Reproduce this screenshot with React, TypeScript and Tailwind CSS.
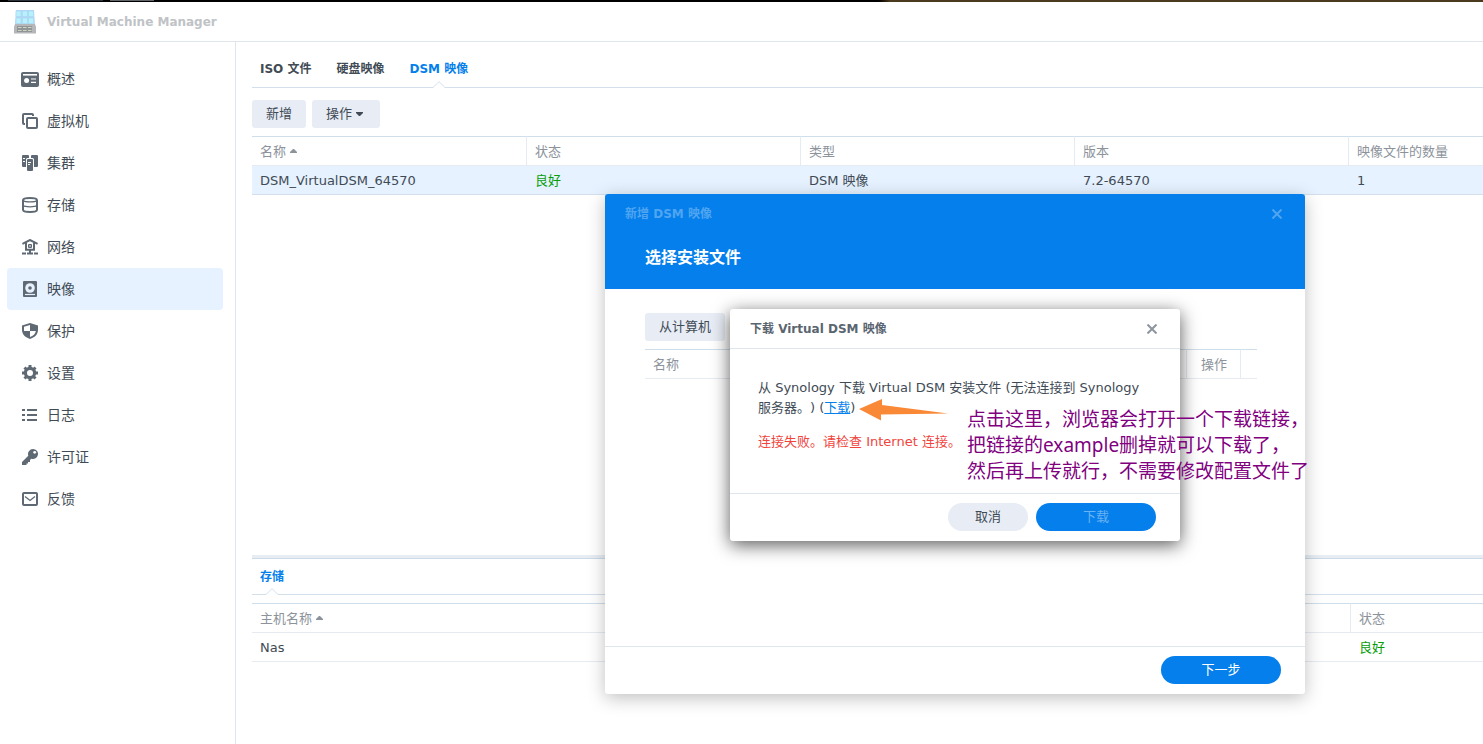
import type { ReactNode } from 'react';

const OverviewIcon = () => (
  <svg width="18" height="16" viewBox="0 0 18 16" className="-mx-px">
    <rect y="1" width="18" height="15" rx="2" fill="#5f6974" />
    <path d="M2 3h14v1.6H2z" fill="#fff" />
    <circle cx="5.6" cy="9.5" r="2.5" fill="#fff" />
    <path d="M10 8h5M10 11.3h5" stroke="#fff" strokeWidth="1.2" />
  </svg>
);

const MachineIcon = () => (
  <svg width="16" height="16" viewBox="0 0 16 16" fill="none" stroke="#5f6974" strokeWidth="2">
    <path d="M3 11H2a1 1 0 0 1-1-1V2a1 1 0 0 1 1-1h8a1 1 0 0 1 1 1v1" />
    <rect x="5" y="5" width="10" height="10" rx="1" />
  </svg>
);

const ClusterIcon = () => (
  <svg width="16" height="16" viewBox="0 0 16 16" fill="#5f6974">
    <path d="M1 0h5a1 1 0 0 1 1 1v2H5.5Q4 3 4 4.5V12H1a1 1 0 0 1-1-1V1a1 1 0 0 1 1-1z" />
    <path d="M10 0h5a1 1 0 0 1 1 1v10a1 1 0 0 1-1 1h-3V4.500Q12 3 10.500 3H9V1a1 1 0 0 1 1-1z" />
    <rect x="5" y="4" width="6" height="12" rx="1" />
    <path d="M1 3.500h2M1 6.500h2M6 7.500h3M6 9.500h2" stroke="#fff" />
  </svg>
);

const StorageIcon = () => (
  <svg width="16" height="16" viewBox="0 0 16 16" fill="none" stroke="#5f6974">
    <path d="M1 3.2C1 .3 15 .3 15 3.2V12.800C15 15.700 1 15.700 1 12.800z" strokeWidth="2" />
    <path d="M1 3.500C3 5.300 13 5.300 15 3.500M1 8.500C3 10.200 13 10.200 15 8.500" strokeWidth="1.300" />
  </svg>
);

const NetworkIcon = () => (
  <svg width="16" height="16" viewBox="0 0 16 16" fill="none" stroke="#5f6974">
    <path d="M.4 4.800L8 1l7.600 3.800" strokeWidth="2" />
    <path d="M4 3.500V10.700h8V3.500" strokeWidth="2" />
    <path d="M8 11v3M0 14.500h4M5 14.500h6M12 14.500h4" strokeWidth="2" />
    <rect x="6" y="5" width="4" height="4" rx="1" fill="#5f6974" stroke="none" />
    <circle cx="8" cy="7" r=".8" fill="#fff" stroke="none" />
  </svg>
);

const ImageIcon = () => (
  <svg width="16" height="16" viewBox="0 0 16 16">
    <rect x="1" width="14" height="16" rx="1" fill="#5f6974" />
    <circle cx="8" cy="7" r="4.800" fill="#e6f2ff" />
    <circle cx="8" cy="7" r="1.800" fill="#5f6974" />
    <path d="M3 13.500h10" stroke="#e6f2ff" strokeWidth="1.200" />
  </svg>
);

const ShieldIcon = () => (
  <svg width="16" height="16" viewBox="0 0 16 16">
    <path d="M8 0l8 2.500V7c0 4.500-3.500 7.500-8 9C3.500 14.500 0 11.500 0 7V2.500z" fill="#5f6974" />
    <path d="M8 2v6H2V3.800zM8 8h5.800C13.500 11 11 12.800 8 14z" fill="#fff" />
  </svg>
);

const GearIcon = () => (
  <svg width="16" height="16" viewBox="0 0 16 16" fill="none" stroke="#5f6974">
    <circle cx="8" cy="8" r="4.600" strokeWidth="3.200" />
    <path d="M8 0v3M8 13v3M0 8h3M13 8h3M2.500 2.500l2 2M11.500 11.500l2 2M13.500 2.500l-2 2M4.500 11.500l-2 2" strokeWidth="3" />
  </svg>
);

const LogIcon = () => (
  <svg width="16" height="16" viewBox="0 0 16 16" stroke="#5f6974" strokeWidth="2">
    <path d="M0 3h3M5 3h10M0 8h3M5 8h10M0 13h3M5 13h10" />
  </svg>
);

const KeyIcon = () => (
  <svg width="16" height="16" viewBox="0 0 16 16">
    <path d="M11 0a5 5 0 1 1-1.700 9.700L8 11v2H6v1.500H4.500V16H0v-3l6.300-6.300A5 5 0 0 1 11 0z" fill="#5f6974" />
    <circle cx="12.700" cy="3.300" r="1.400" fill="#fff" />
  </svg>
);

const MailIcon = () => (
  <svg width="16" height="16" viewBox="0 0 16 16" fill="none" stroke="#5f6974">
    <rect x="1" y="2" width="14" height="12" rx="1" strokeWidth="2" />
    <path d="M3 5.500l5 4 5-4" strokeWidth="1.300" />
  </svg>
);

const AppLogo = () => (
  <svg width="24" height="24" viewBox="0 0 24 24">
    <path d="M3 0h18l1 15H2z" fill="#b9d3f5" />
    <g fill="#b8f0fb" stroke="#a0dbf3" strokeWidth=".6">
      <rect x="3" y="1" width="5" height="5.500" />
      <rect x="9.300" y="1" width="5" height="5.500" />
      <rect x="15.600" y="1" width="5" height="5.500" />
      <rect x="3" y="8" width="5" height="5.500" />
      <rect x="9.300" y="8" width="5" height="5.500" />
      <rect x="15.600" y="8" width="5" height="5.500" />
    </g>
    <path d="M2 14h20l1 3v6.500H1V17z" fill="#b4b6b9" />
    <rect x="4" y="16" width="15" height="6" fill="#929596" />
    <path d="M5 17.500h3.500M10 17.500h3.500M15 17.500h3.500M5 20.500h3.500M10 20.500h3.500M15 20.500h3.500" stroke="#cdd5c4" strokeWidth="1.200" />
  </svg>
);

const CloseIcon = () => (
  <svg width="10" height="10" viewBox="0 0 10 10" stroke="currentColor" strokeWidth="2">
    <path d="M.5.5l9 9M9.500.5l-9 9" />
  </svg>
);

const SortIcon = () => (
  <svg width="7" height="7" viewBox="0 0 7 7" className="inline-block align-middle ml-1" fill="#8c939b">
    <path d="M0 4V3l3-3h1l3 3v1z" />
  </svg>
);

const Notch = () => (
  <svg width="12" height="7" viewBox="0 0 12 7" className="absolute left-1/2 -bottom-px -translate-x-1/2">
    <path d="M0 6.500L6 .7l6 5.800V7H0z" fill="#fff" />
    <path d="M0 6.500L6 .7l6 5.800" fill="none" stroke="#d5e0ec" />
  </svg>
);

const menu: { label: string; icon: ReactNode; active?: boolean }[] = [
  { label: '概述', icon: <OverviewIcon /> },
  { label: '虚拟机', icon: <MachineIcon /> },
  { label: '集群', icon: <ClusterIcon /> },
  { label: '存储', icon: <StorageIcon /> },
  { label: '网络', icon: <NetworkIcon /> },
  { label: '映像', icon: <ImageIcon />, active: true },
  { label: '保护', icon: <ShieldIcon /> },
  { label: '设置', icon: <GearIcon /> },
  { label: '日志', icon: <LogIcon /> },
  { label: '许可证', icon: <KeyIcon /> },
  { label: '反馈', icon: <MailIcon /> },
];

const Sidebar = () => (
  <nav className="w-[236px] shrink-0 border-r border-[#dfe5ec] pt-4 pl-[7px] pr-3">
    {menu.map(({ label, icon, active }) => (
      <a
        key={label}
        href="#"
        className={`flex items-center gap-[9px] h-[42px] px-[15px] rounded text-sm text-[#414b55] ${active ? 'bg-[#e6f2ff]' : ''}`}
      >
        {icon}
        <span>{label}</span>
      </a>
    ))}
  </nav>
);

const Th = ({ children, className = '' }: { children?: ReactNode; className?: string }) => (
  <th
    className={`h-[30px] px-2 pt-0.5 text-left font-normal text-[#8c939b] border-t border-b border-t-[#cfdeeb] border-b-[#e6ebf2] ${className}`}
  >
    {children}
  </th>
);

const ImagePanel = () => (
  <section className="flex-1">
    <div className="flex gap-[25px] h-[46px] px-2 border-b border-[#d3e0ec] text-xs font-bold">
      <button className="pt-2">ISO 文件</button>
      <button className="pt-2">硬盘映像</button>
      <button className="relative pt-2 text-[#057feb]">
        DSM 映像
        <Notch />
      </button>
    </div>
    <div className="flex gap-1.5 pt-3 pb-2">
      <button className="h-7 px-[14px] rounded-[3px] bg-[#e8edf5]">新增</button>
      <button className="flex items-center h-7 px-[14px] rounded-[3px] bg-[#e8edf5]">
        操作
        <svg width="7" height="4" viewBox="0 0 7 4" className="ml-1 mr-[3px]" fill="#414b55">
          <path d="M0 0h7v1L4 4H3L0 1z" />
        </svg>
      </button>
    </div>
    <table className="w-full table-fixed border-separate border-spacing-0">
      <colgroup>
        <col className="w-[275px]" />
        <col className="w-[274px]" />
        <col className="w-[274px]" />
        <col className="w-[274px]" />
        <col />
      </colgroup>
      <thead>
        <tr>
          <Th className="border-r border-r-[#e6ebf2]">名称<SortIcon /></Th>
          <Th className="border-r border-r-[#e6ebf2]">状态</Th>
          <Th className="border-r border-r-[#e6ebf2]">类型</Th>
          <Th className="border-r border-r-[#e6ebf2]">版本</Th>
          <Th className="whitespace-nowrap">映像文件的数量</Th>
        </tr>
      </thead>
      <tbody>
        <tr className="bg-[#e6f2ff] *:h-[29px] *:px-2 *:pt-0.5 *:border-b *:border-[#d3e0ec]">
          <td>DSM_VirtualDSM_64570</td>
          <td className="text-[#089e08]">良好</td>
          <td>DSM 映像</td>
          <td>7.2-64570</td>
          <td>1</td>
        </tr>
      </tbody>
    </table>
  </section>
);

const StoragePanel = () => (
  <section className="h-[189px] shrink-0">
    <div className="h-1 bg-[#e8edf4] border-b border-[#cbdbe8]" />
    <div className="flex h-9 mb-2 px-2 border-b border-[#d3e0ec] text-xs font-bold">
      <button className="relative text-[#057feb]">
        存储
        <Notch />
      </button>
    </div>
    <table className="w-full table-fixed border-separate border-spacing-0">
      <colgroup>
        <col />
        <col className="w-[132px]" />
      </colgroup>
      <thead>
        <tr>
          <Th className="border-r border-r-[#e6ebf2]">主机名称<SortIcon /></Th>
          <Th>状态</Th>
        </tr>
      </thead>
      <tbody>
        <tr className="*:h-[29px] *:px-2 *:pt-0.5 *:border-b *:border-[#e6ebf2]">
          <td>Nas</td>
          <td className="text-[#089e08]">良好</td>
        </tr>
      </tbody>
    </table>
  </section>
);

const DownloadDialog = () => (
  <div
    role="dialog"
    aria-label="下载 Virtual DSM 映像"
    className="absolute top-[115px] left-1/2 -translate-x-1/2 w-[450px] rounded-[3px] bg-white shadow-[0_4px_18px_rgba(0,0,0,0.65)]"
  >
    <header className="flex items-center justify-between h-10 pl-5 pr-[23px] border-b border-[#dfe5ec]">
      <h3 className="text-xs font-bold text-[#5a6570]">下载 Virtual DSM 映像</h3>
      <button aria-label="关闭" className="text-[#8d959e]"><CloseIcon /></button>
    </header>
    <div className="h-36 px-7 pt-[29px] leading-5 whitespace-nowrap [text-spacing-trim:space-all]">
      <p>
        从 Synology 下载 Virtual DSM 安装文件 (无法连接到 Synology
        <br />
        服务器。) (<a href="#" className="text-[#057feb] underline">下载</a>)
      </p>
      <p className="mt-[14px] text-[#f0443c]">连接失败。请检查 Internet 连接。</p>
    </div>
    <footer className="flex justify-end gap-2 h-12 pt-[9px] pr-6 border-t border-[#dfe5ec]">
      <button className="w-20 h-7 rounded-full bg-[#e8edf5]">取消</button>
      <button className="w-[120px] h-7 rounded-full bg-[#057feb] text-[#69b2f3]">下载</button>
    </footer>
  </div>
);

const Annotation = () => (
  <>
    <svg width="90" height="22" viewBox="0 0 90 22" className="absolute left-[254px] top-[205px]">
      <path d="M0 10L23 0V6L89 14.500L22 15.500V21.500z" fill="#f98937" />
    </svg>
    <p className="absolute left-[362px] top-[212px] font-['Noto_Sans','Noto_Sans_CJK_SC',sans-serif] text-[19px] leading-[26px] whitespace-nowrap text-[#800080]">
      点击这里，浏览器会打开一个下载链接，
      <br />
      把链接的example删掉就可以下载了，
      <br />
      然后再上传就行，不需要修改配置文件了
    </p>
  </>
);

const ImageWizard = () => (
  <div
    role="dialog"
    aria-label="新增 DSM 映像"
    className="absolute left-[605px] top-[194px] flex flex-col w-[700px] h-[500px] rounded-[3px] bg-white shadow-[0_4px_18px_rgba(0,0,0,0.25)]"
  >
    <header className="h-[95px] rounded-t-[3px] bg-[#057feb]">
      <div className="flex items-center justify-between h-10 pl-5 pr-[23px] text-[#50a5f1]">
        <h2 className="text-xs font-bold">新增 DSM 映像</h2>
        <button aria-label="关闭"><CloseIcon /></button>
      </div>
      <p className="px-10 pt-3 text-base leading-6 font-bold text-white">选择安装文件</p>
    </header>
    <div className="flex-1 pt-6 pl-10 pr-12">
      <button className="w-20 h-7 mb-2 rounded-[3px] bg-[#e8edf5]">从计算机</button>
      <table className="w-full table-fixed border-separate border-spacing-0">
        <colgroup>
          <col />
          <col className="w-[54px]" />
          <col className="w-4" />
        </colgroup>
        <thead>
          <tr>
            <Th className="border-r border-r-[#e6ebf2]">名称</Th>
            <Th className="border-r border-r-[#e6ebf2] pl-[14px] whitespace-nowrap">操作</Th>
            <Th />
          </tr>
        </thead>
      </table>
    </div>
    <footer className="flex justify-end h-12 pt-[9px] pr-6 border-t border-[#dfe5ec]">
      <button className="w-[120px] h-7 rounded-full bg-[#057feb] text-white">下一步</button>
    </footer>
    <DownloadDialog />
    <Annotation />
  </div>
);

const App = () => {
  return (
    <div className="relative flex flex-col min-h-screen overflow-hidden bg-white font-['DejaVu_Sans','Noto_Sans_CJK_SC',sans-serif] text-[13px] text-[#414b55]">
      <div className="flex h-0.5 bg-linear-to-r from-black from-59% to-[#4a3a1e] to-60%">
        <div className="ml-2 w-[95px] h-px bg-[#2b343d]" />
        <div className="ml-[7px] w-11 h-px bg-[#62666b]" />
      </div>
      <header className="flex items-center h-10 gap-2.5 px-[13px] border-b border-[#dfe5ec]">
        <AppLogo />
        <h1 className="text-xs font-bold text-[#c0c3c6]">Virtual Machine Manager</h1>
      </header>
      <div className="flex flex-1">
        <Sidebar />
        <main className="flex flex-col flex-1 min-w-0 pl-4">
          <ImagePanel />
          <StoragePanel />
        </main>
      </div>
      <ImageWizard />
    </div>
  );
};

export default App;
